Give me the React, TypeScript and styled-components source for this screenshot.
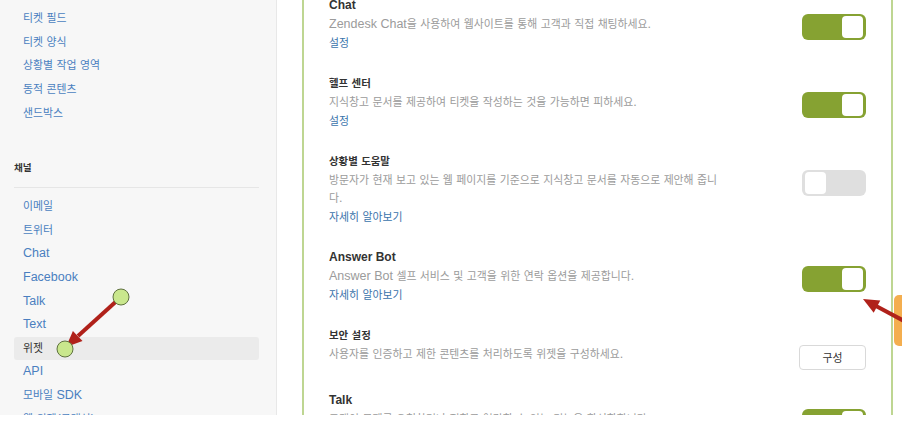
import styled, { createGlobalStyle } from "styled-components";

const GlobalStyle = createGlobalStyle`
  body {
    margin: 0;
    background: #fff;
    font-family: "Liberation Sans", "Noto Sans CJK KR", sans-serif;
  }
`;

const Frame = styled.div`
  position: relative;
  display: flex;
  height: 415px;
  overflow: hidden;
  background: #fff;
`;

const Sidebar = styled.aside`
  flex: none;
  width: 277px;
  box-sizing: border-box;
  padding: 0 17px 0 14px;
  background: #f7f7f7;
  border-right: 1px solid #e8e8e8;
`;

const NavList = styled.ul<{ $top: number }>`
  list-style: none;
  margin: ${(p) => p.$top}px 0 0;
  padding: 0;
`;

const NavItem = styled.li<{ $active?: boolean }>`
  height: 23.6px;
  line-height: 23.6px;
  padding: 0 9px;
  border-radius: 3px;
  font-size: 12.5px;
  color: ${(p) => (p.$active ? "#333" : "#4a7fc0")};
  background: ${(p) => (p.$active ? "#ebebeb" : "transparent")};
`;

const SectionTitle = styled.h4`
  margin: 33.8px 0 0;
  padding-bottom: 12px;
  line-height: 16px;
  font-size: 11px;
  font-weight: bold;
  color: #333;
  border-bottom: 1px solid #e6e6e6;
`;

const Main = styled.main`
  flex: 1;
  padding-left: 25px;
`;

const Panel = styled.section`
  width: 591px;
  box-sizing: border-box;
  margin-top: -15px;
  padding: 0 25px;
  border-left: 2px solid #bed692;
  border-right: 2px solid #bed692;
`;

const Row = styled.div`
  display: flex;
  align-items: flex-start;
  justify-content: space-between;
  padding: 10px 0;
`;

const TextCol = styled.div`
  max-width: 399px;
`;

const Title = styled.div`
  font-size: 12px;
  font-weight: bold;
  line-height: 20px;
  color: #333;
`;

const Desc = styled.div`
  font-size: 12.5px;
  line-height: 18px;
  color: #9b9b9b;
`;

const MoreLink = styled.a`
  display: block;
  font-size: 12.5px;
  line-height: 20px;
  color: #3a73ab;
  text-decoration: none;
`;

const Hg = styled.span`
  font-family: "Noto Sans CJK KR", sans-serif;
  font-size: 0.87em;
  line-height: 1;
`;

const Toggle = styled.div<{ $on: boolean }>`
  flex: none;
  display: flex;
  justify-content: ${(p) => (p.$on ? "flex-end" : "flex-start")};
  align-items: center;
  width: 64px;
  height: 26px;
  margin-top: 19px;
  box-sizing: border-box;
  padding: 2px 3px;
  border-radius: 6px;
  background: ${(p) => (p.$on ? "#86a232" : "#dfdfdf")};
`;

const Knob = styled.span`
  width: 21px;
  height: 22px;
  border-radius: 4px;
  background: #fff;
`;

const ConfigButton = styled.button`
  flex: none;
  width: 67px;
  height: 25px;
  margin-top: 20px;
  border: 1px solid #d9d9d9;
  border-radius: 4px;
  background: #fff;
  font-family: inherit;
  font-size: 12.5px;
  color: #333;
`;

const HelpTab = styled.div`
  position: absolute;
  left: 894px;
  top: 295px;
  width: 20px;
  height: 51px;
  border-radius: 5px 0 0 5px;
  background: #f4ae4f;
`;

const Marks = styled.svg`
  position: absolute;
  left: 0;
  top: 0;
  pointer-events: none;
`;

// hangul runs get the CJK face at a narrower size, latin stays as is
function ko(text: string) {
  return text.split(/([\u1100-\u11ff\u3130-\u318f\uac00-\ud7af]+)/).map((part, i) =>
    i % 2 === 1 ? <Hg key={i}>{part}</Hg> : part
  );
}

const manage = ["일정", "티켓 필드", "티켓 양식", "상황별 작업 영역", "동적 콘텐츠", "샌드박스"];
const channels = ["이메일", "트위터", "Chat", "Facebook", "Talk", "Text", "위젯", "API", "모바일 SDK", "웹 위젯(클래식)"];

type Setting = {
  title: string;
  desc: string;
  link?: string;
  toggle?: boolean;
};

const settings: Setting[] = [
  { title: "Chat", desc: "Zendesk Chat을 사용하여 웹사이트를 통해 고객과 직접 채팅하세요.", link: "설정", toggle: true },
  { title: "헬프 센터", desc: "지식창고 문서를 제공하여 티켓을 작성하는 것을 가능하면 피하세요.", link: "설정", toggle: true },
  {
    title: "상황별 도움말",
    desc: "방문자가 현재 보고 있는 웹 페이지를 기준으로 지식창고 문서를 자동으로 제안해 줍니다.",
    link: "자세히 알아보기",
    toggle: false,
  },
  { title: "Answer Bot", desc: "Answer Bot 셀프 서비스 및 고객을 위한 연락 옵션을 제공합니다.", link: "자세히 알아보기", toggle: true },
  { title: "보안 설정", desc: "사용자를 인증하고 제한 콘텐츠를 처리하도록 위젯을 구성하세요." },
  { title: "Talk", desc: "고객이 문제를 요청하거나 전화로 연락할 수 있는 기능을 활성화합니다.", link: "설정", toggle: true },
];

function Annotations() {
  return (
    <Marks width={902} height={415}>
      <line x1={121} y1={297} x2={78} y2={336} stroke="#b0211a" strokeWidth={4} />
      <polygon points="66,347 82.5,341 72.9,330.9" fill="#b0211a" />
      <circle cx={121} cy={297} r={8} fill="#c9e78d" stroke="#5f7140" strokeWidth={1} />
      <circle cx={65} cy={349} r={8} fill="#c9e78d" stroke="#5f7140" strokeWidth={1} />
      <line x1={906} y1={322} x2={876} y2={306} stroke="#b0211a" strokeWidth={4} />
      <polygon points="863,299 880.3,300.4 873.7,312.8" fill="#b0211a" />
    </Marks>
  );
}

export default function App() {
  return (
    <>
      <GlobalStyle />
      <Frame>
        <Sidebar>
          <NavList $top={-16.4}>
            {manage.map((m) => (
              <NavItem key={m}>{ko(m)}</NavItem>
            ))}
          </NavList>
          <SectionTitle>{ko("채널")}</SectionTitle>
          <NavList $top={7.2}>
            {channels.map((c) => (
              <NavItem key={c} $active={c === "위젯"}>
                {ko(c)}
              </NavItem>
            ))}
          </NavList>
        </Sidebar>
        <Main>
          <Panel>
            {settings.map((s) => (
              <Row key={s.title}>
                <TextCol>
                  <Title>{ko(s.title)}</Title>
                  <Desc>{ko(s.desc)}</Desc>
                  {s.link && <MoreLink href="#">{ko(s.link)}</MoreLink>}
                </TextCol>
                {s.toggle === undefined ? (
                  <ConfigButton>{ko("구성")}</ConfigButton>
                ) : (
                  <Toggle $on={s.toggle}>
                    <Knob />
                  </Toggle>
                )}
              </Row>
            ))}
          </Panel>
        </Main>
        <HelpTab />
        <Annotations />
      </Frame>
    </>
  );
}
